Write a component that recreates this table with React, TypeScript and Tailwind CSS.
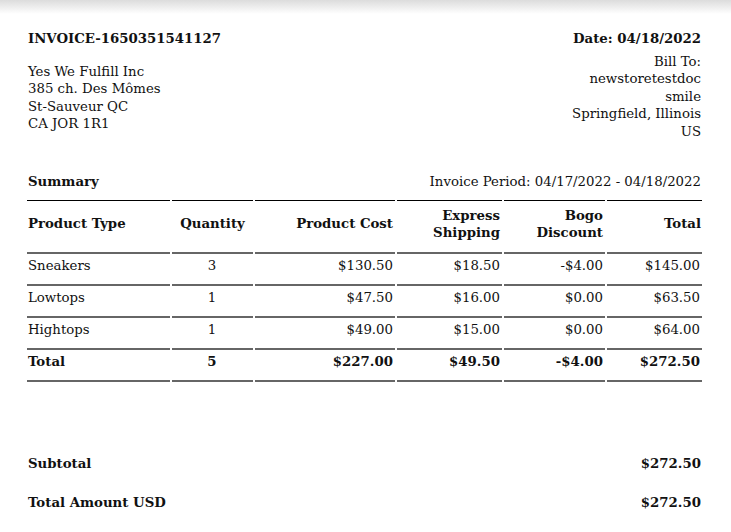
const rows = [
  { type: "Sneakers", qty: "3", cost: "$130.50", ship: "$18.50", bogo: "-$4.00", total: "$145.00" },
  { type: "Lowtops", qty: "1", cost: "$47.50", ship: "$16.00", bogo: "$0.00", total: "$63.50" },
  { type: "Hightops", qty: "1", cost: "$49.00", ship: "$15.00", bogo: "$0.00", total: "$64.00" },
];

const cell = "border-t-2 border-[#666] pt-[3px] pb-[10px] pl-[1px] pr-[2px] align-top";

export default function App() {
  return (
    <div className="min-h-[532px] w-[731px] bg-white text-[#111] text-[13.3px] leading-[17.5px] font-['DejaVu_Serif',serif]">
      {/* top shadow */}
      <div className="h-[14px] bg-gradient-to-b from-[#dcdcdc] to-white" />

      <div className="pl-[28px] pr-[30px] pt-[16px]">
        {/* Header */}
        <div className="flex justify-between">
          <div>
            <div className="font-bold">INVOICE-1650351541127</div>
            <div className="mt-[15px]">
              <div>Yes We Fulfill Inc</div>
              <div>385 ch. Des Mômes</div>
              <div>St-Sauveur QC</div>
              <div>CA JOR 1R1</div>
            </div>
          </div>
          <div className="text-right">
            <div className="font-bold">Date: 04/18/2022</div>
            <div className="mt-[5px]">
              <div>Bill To:</div>
              <div>newstoretestdoc</div>
              <div>smile</div>
              <div>Springfield, Illinois</div>
              <div>US</div>
            </div>
          </div>
        </div>

        {/* Summary */}
        <div className="mt-[33px] flex justify-between">
          <div className="font-bold">Summary</div>
          <div>Invoice Period: 04/17/2022 - 04/18/2022</div>
        </div>

        <table className="mt-[9px] -ml-[3px] w-[679px] table-fixed border-separate border-spacing-x-[2px] border-spacing-y-0 leading-[17px]">
          <colgroup>
            <col className="w-[143px]" />
            <col className="w-[81px]" />
            <col className="w-[140px]" />
            <col className="w-[105px]" />
            <col className="w-[101px]" />
            <col className="w-[95px]" />
          </colgroup>
          <thead>
            <tr className="font-bold">
              <th className="border-t border-black pt-[6px] pb-[11px] pl-[1px] text-left align-middle">Product Type</th>
              <th className="border-t border-black pt-[6px] pb-[11px] text-center align-middle">Quantity</th>
              <th className="border-t border-black pt-[6px] pb-[11px] pr-[2px] text-right align-middle">Product Cost</th>
              <th className="border-t border-black pt-[6px] pb-[11px] pr-[2px] text-right align-middle">
                Express
                <br />
                Shipping
              </th>
              <th className="border-t border-black pt-[6px] pb-[11px] pr-[2px] text-right align-middle">
                Bogo
                <br />
                Discount
              </th>
              <th className="border-t border-black pt-[6px] pb-[11px] pr-[1px] text-right align-middle">Total</th>
            </tr>
          </thead>
          <tbody>
            {rows.map((r) => (
              <tr key={r.type}>
                <td className={`${cell} text-left`}>{r.type}</td>
                <td className={`${cell} text-center`}>{r.qty}</td>
                <td className={`${cell} text-right`}>{r.cost}</td>
                <td className={`${cell} text-right`}>{r.ship}</td>
                <td className={`${cell} text-right`}>{r.bogo}</td>
                <td className={`${cell} text-right`}>{r.total}</td>
              </tr>
            ))}
            <tr className="font-bold">
              <td className={`${cell} border-b-2 text-left`}>Total</td>
              <td className={`${cell} border-b-2 text-center`}>5</td>
              <td className={`${cell} border-b-2 text-right`}>$227.00</td>
              <td className={`${cell} border-b-2 text-right`}>$49.50</td>
              <td className={`${cell} border-b-2 text-right`}>-$4.00</td>
              <td className={`${cell} border-b-2 text-right`}>$272.50</td>
            </tr>
          </tbody>
        </table>

        {/* Totals */}
        <div className="mt-[73px] flex justify-between font-bold">
          <div>Subtotal</div>
          <div>$272.50</div>
        </div>
        <div className="mt-[22px] flex justify-between font-bold">
          <div>Total Amount USD</div>
          <div>$272.50</div>
        </div>
      </div>
    </div>
  );
}
